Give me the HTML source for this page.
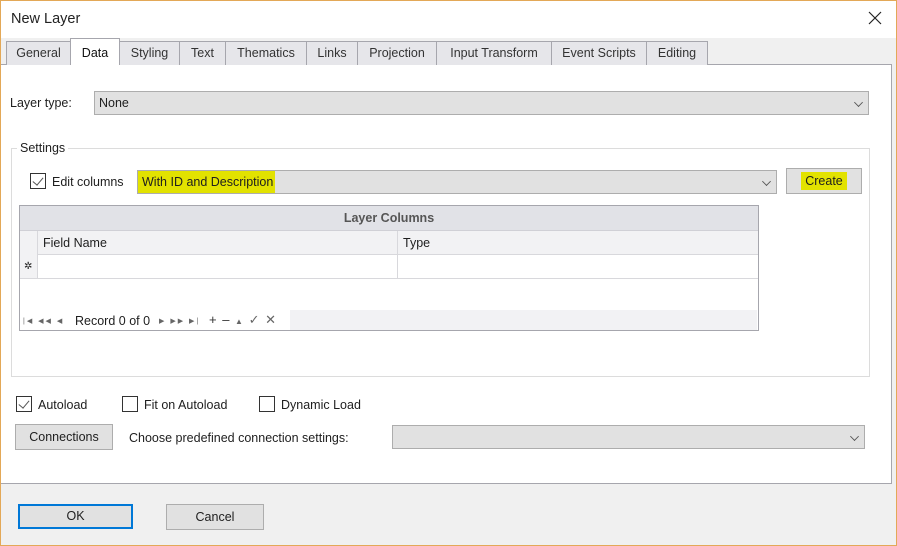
<!DOCTYPE html>
<html><head><style>
*{box-sizing:border-box;margin:0;padding:0}
body{width:897px;height:546px;position:relative;background:#f0f0f0;font-family:"Liberation Sans",sans-serif;font-size:12.5px;color:#1e1e1e;overflow:hidden}
.a{position:absolute}
.frame{left:0;top:0;width:897px;height:546px;border:1px solid #e3a857;z-index:10;pointer-events:none}
.title{left:1px;top:1px;width:895px;height:37px;background:#fff}
.tab{top:41px;height:24px;background:#e6e6ea;border:1px solid #a6a6ad;border-bottom:none;text-align:center;line-height:22px;font-size:12.5px;color:#333}
.panel{left:1px;top:64px;width:891px;height:420px;background:#fff;border:1px solid #a6a6ad;border-left:none}
.combo{background:#e1e1e1;border:1px solid #adadad;height:24px;line-height:22px;padding-left:4px}
.chev{position:absolute;right:6px;top:7px;width:7px;height:7px;border-right:1px solid #555;border-bottom:1px solid #555;transform:rotate(45deg) scale(.9)}
.btn{background:#e1e1e1;border:1px solid #adadad;text-align:center;height:26px;line-height:24px}
.cb{width:16px;height:16px;border:1px solid #333;background:#fff}
.cb.c::after{content:"";position:absolute;left:4px;top:1px;width:5px;height:9px;border-right:1px solid #555;border-bottom:1px solid #555;transform:rotate(40deg)}
.hl{background:#e2e200}
.nav{font-size:7px;color:#666;letter-spacing:2px}
</style></head><body>
<div class="a frame"></div>
<div class="a title"></div>
<div class="a" style="left:11px;top:11px;font-size:14.5px;color:#222">New Layer</div>
<svg class="a" style="left:868px;top:11px" width="14" height="14"><path d="M1 1L13 13M13 1L1 13" stroke="#222" stroke-width="1.2"/></svg>

<div class="a panel"></div>
<div class="a tab" style="left:6px;width:65px">General</div>
<div class="a tab" style="left:70px;width:50px;top:38px;height:27px;background:#fff;line-height:28px;color:#111">Data</div>
<div class="a tab" style="left:119px;width:61px">Styling</div>
<div class="a tab" style="left:179px;width:47px">Text</div>
<div class="a tab" style="left:225px;width:82px">Thematics</div>
<div class="a tab" style="left:306px;width:52px">Links</div>
<div class="a tab" style="left:357px;width:80px">Projection</div>
<div class="a tab" style="left:436px;width:116px">Input Transform</div>
<div class="a tab" style="left:551px;width:96px">Event Scripts</div>
<div class="a tab" style="left:646px;width:62px">Editing</div>

<div class="a" style="left:10px;top:96px">Layer type:</div>
<div class="a combo" style="left:94px;top:91px;width:775px">None<span class="chev"></span></div>

<div class="a" style="left:11px;top:148px;width:859px;height:229px;border:1px solid #dcdcdc"></div>
<div class="a" style="left:17px;top:141px;background:#fff;padding:0 3px">Settings</div>

<div class="a cb c" style="left:30px;top:173px"></div>
<div class="a" style="left:52px;top:175px">Edit columns</div>
<div class="a combo" style="left:137px;top:170px;width:640px;padding-left:0"><span class="hl" style="display:inline-block;padding:0 2px 0 4px">With ID and Description</span><span class="chev"></span></div>
<div class="a btn" style="left:786px;top:168px;width:76px"><span class="hl" style="padding:2px 4px">Create</span></div>

<div class="a" style="left:19px;top:205px;width:740px;height:126px;border:1px solid #a6a6ad;background:#fff"></div>
<div class="a" style="left:20px;top:206px;width:738px;height:25px;background:#e1e2e7;border-bottom:1px solid #d0d0d6;text-align:center;line-height:24px;font-weight:bold;color:#555">Layer Columns</div>
<div class="a" style="left:20px;top:231px;width:738px;height:24px;background:#f2f2f4;border-bottom:1px solid #d8d8dc"></div>
<div class="a" style="left:20px;top:231px;width:18px;height:47px;background:#f2f2f4;border-right:1px solid #d8d8dc"></div>
<div class="a" style="left:397px;top:231px;height:47px;border-left:1px solid #d8d8dc"></div>
<div class="a" style="left:20px;top:278px;width:738px;border-top:1px solid #d8d8dc"></div>
<div class="a" style="left:43px;top:236px">Field Name</div>
<div class="a" style="left:403px;top:236px">Type</div>
<div class="a" style="left:24px;top:261px;font-size:10px">✲</div>
<div class="a" style="left:290px;top:310px;width:467px;height:20px;background:#f2f2f4"></div>
<div class="a nav" style="left:23px;top:317px">|◀ ◀◀ ◀</div>
<div class="a" style="left:75px;top:314px">Record 0 of 0</div>
<div class="a nav" style="left:159px;top:317px">▶ ▶▶ ▶|</div>
<div class="a" style="left:209px;top:312px;font-size:13px;color:#333;word-spacing:2px">+ – <span style="font-size:8px;color:#666">▲</span> <span style="color:#666">✓ ✕</span></div>

<div class="a cb c" style="left:16px;top:396px"></div>
<div class="a" style="left:38px;top:398px">Autoload</div>
<div class="a cb" style="left:122px;top:396px"></div>
<div class="a" style="left:144px;top:398px">Fit on Autoload</div>
<div class="a cb" style="left:259px;top:396px"></div>
<div class="a" style="left:281px;top:398px">Dynamic Load</div>
<div class="a btn" style="left:15px;top:424px;width:98px">Connections</div>
<div class="a" style="left:129px;top:431px">Choose predefined connection settings:</div>
<div class="a combo" style="left:392px;top:425px;width:473px"><span class="chev"></span></div>

<div class="a btn" style="left:18px;top:504px;width:115px;height:25px;line-height:21px;border:2px solid #0078d7">OK</div>
<div class="a btn" style="left:166px;top:504px;width:98px;height:26px">Cancel</div>
</body></html>
